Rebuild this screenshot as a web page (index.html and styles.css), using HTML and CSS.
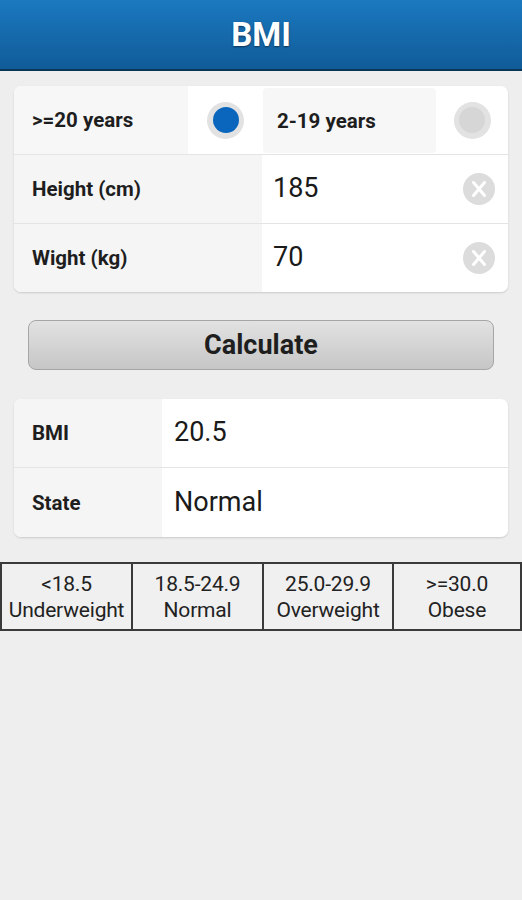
FILE: index.html
```html
<!DOCTYPE html>
<html lang="en">
<head>
    <meta charset="UTF-8">
    <meta name="viewport" content="width=device-width, initial-scale=1.0">
    <title>BMI</title>
    <link rel="stylesheet" href="styles.css">
</head>
<body>
    <header class="topbar">
        <h1>BMI</h1>
    </header>

    <!-- Input card -->
    <div class="card">
        <div class="row">
            <div class="label age">&gt;=20 years</div>
            <div class="radio-cell"><span class="radio checked"></span></div>
            <div class="label age age-alt">2-19 years</div>
            <div class="radio-cell grow"><span class="radio"></span></div>
        </div>
        <div class="row">
            <div class="label wide">Height (cm)</div>
            <div class="value">185</div>
            <span class="clear">
                <svg width="32" height="32" viewBox="0 0 32 32">
                    <circle cx="16" cy="16" r="16" fill="#dcdcdc"/>
                    <path d="M10.5 9.5 L21.5 22.5 M21.5 9.5 L10.5 22.5" stroke="#fff" stroke-width="3" stroke-linecap="round"/>
                </svg>
            </span>
        </div>
        <div class="row">
            <div class="label wide">Wight (kg)</div>
            <div class="value">70</div>
            <span class="clear">
                <svg width="32" height="32" viewBox="0 0 32 32">
                    <circle cx="16" cy="16" r="16" fill="#dcdcdc"/>
                    <path d="M10.5 9.5 L21.5 22.5 M21.5 9.5 L10.5 22.5" stroke="#fff" stroke-width="3" stroke-linecap="round"/>
                </svg>
            </span>
        </div>
    </div>

    <div class="actions">
        <button class="calc">Calculate</button>
    </div>

    <!-- Result card -->
    <div class="card result">
        <div class="row">
            <div class="label narrow">BMI</div>
            <div class="value">20.5</div>
        </div>
        <div class="row">
            <div class="label narrow">State</div>
            <div class="value">Normal</div>
        </div>
    </div>

    <!-- Ranges -->
    <div class="legend">
        <div class="range">&lt;18.5<br>Underweight</div>
        <div class="range">18.5-24.9<br>Normal</div>
        <div class="range">25.0-29.9<br>Overweight</div>
        <div class="range">&gt;=30.0<br>Obese</div>
    </div>
</body>
</html>
```

FILE: styles.css
```css
body {
    margin: 0;
    background: #eeeeee;
    font-family: Roboto, "Liberation Sans", Arial, sans-serif;
    color: #1e1e1e;
    min-height: 900px;
}
.topbar {
    height: 69px;
    background: linear-gradient(#1b79c0, #105b98);
    border-bottom: 2px solid #0b3556;
    display: flex;
    align-items: center;
    justify-content: center;
}
.topbar h1 {
    margin: 0;
    color: #fff;
    font-size: 33px;
    font-weight: bold;
    text-shadow: 0 1px 2px rgba(0, 0, 0, 0.5);
}
.card {
    margin: 15px 14px 0;
    background: #fff;
    border-radius: 7px;
    box-shadow: 0 1px 2px rgba(0, 0, 0, 0.15);
    overflow: hidden;
}
.row {
    display: flex;
    align-items: center;
    height: 68px;
    border-top: 1px solid #e4e4e4;
}
.row:first-child {
    border-top: none;
}
.label {
    align-self: stretch;
    display: flex;
    align-items: center;
    padding-left: 18px;
    background: #f5f5f5;
    font-size: 20.5px;
    font-weight: bold;
    box-sizing: border-box;
}
.label.age {
    width: 174px;
    background: #f7f7f7;
}
.label.age-alt {
    width: 173px;
    padding-left: 14px;
    margin: 2px 0 1px;
    border-radius: 4px;
}
.label.wide {
    width: 248px;
}
.label.narrow {
    width: 148px;
}
.radio-cell {
    width: 75px;
    display: flex;
    justify-content: center;
}
.radio-cell.grow {
    flex: 1;
}
.radio {
    width: 37px;
    height: 37px;
    border-radius: 50%;
    background: #e2e2e2;
    display: flex;
    align-items: center;
    justify-content: center;
}
.radio::after {
    content: "";
    width: 26px;
    height: 26px;
    border-radius: 50%;
    background: #d6d6d6;
}
.radio.checked::after {
    background: #0a66bd;
}
.value {
    flex: 1;
    padding-left: 11px;
    font-size: 27px;
    color: #1a1a1a;
    padding-bottom: 2px;
}
.clear {
    display: flex;
    margin-right: 13px;
}
.actions {
    padding: 28px 28px 0;
}
.calc {
    width: 100%;
    height: 50px;
    border: 1px solid #a6a6a6;
    border-radius: 8px;
    background: linear-gradient(#e2e2e2, #c6c6c6);
    font-family: Roboto, "Liberation Sans", Arial, sans-serif;
    font-size: 27px;
    font-weight: bold;
    color: #1e1e1e;
}
.card.result {
    margin-top: 29px;
}
.result .row {
    height: 68px;
}
.result .row:last-child {
    height: 69px;
}
.result .value {
    padding-left: 12px;
}
.legend {
    margin-top: 25px;
    display: grid;
    grid-template-columns: 131px 131px 130px 130px;
    border-top: 2px solid #3a3a3a;
    border-bottom: 2px solid #3a3a3a;
    background: #f0f0f0;
}
.range {
    border-left: 2px solid #3a3a3a;
    padding: 7px 0 6px;
    text-align: center;
    font-size: 21px;
    line-height: 26px;
    letter-spacing: -0.2px;
    color: #222;
}
.range:last-child {
    border-right: 2px solid #3a3a3a;
}
```
